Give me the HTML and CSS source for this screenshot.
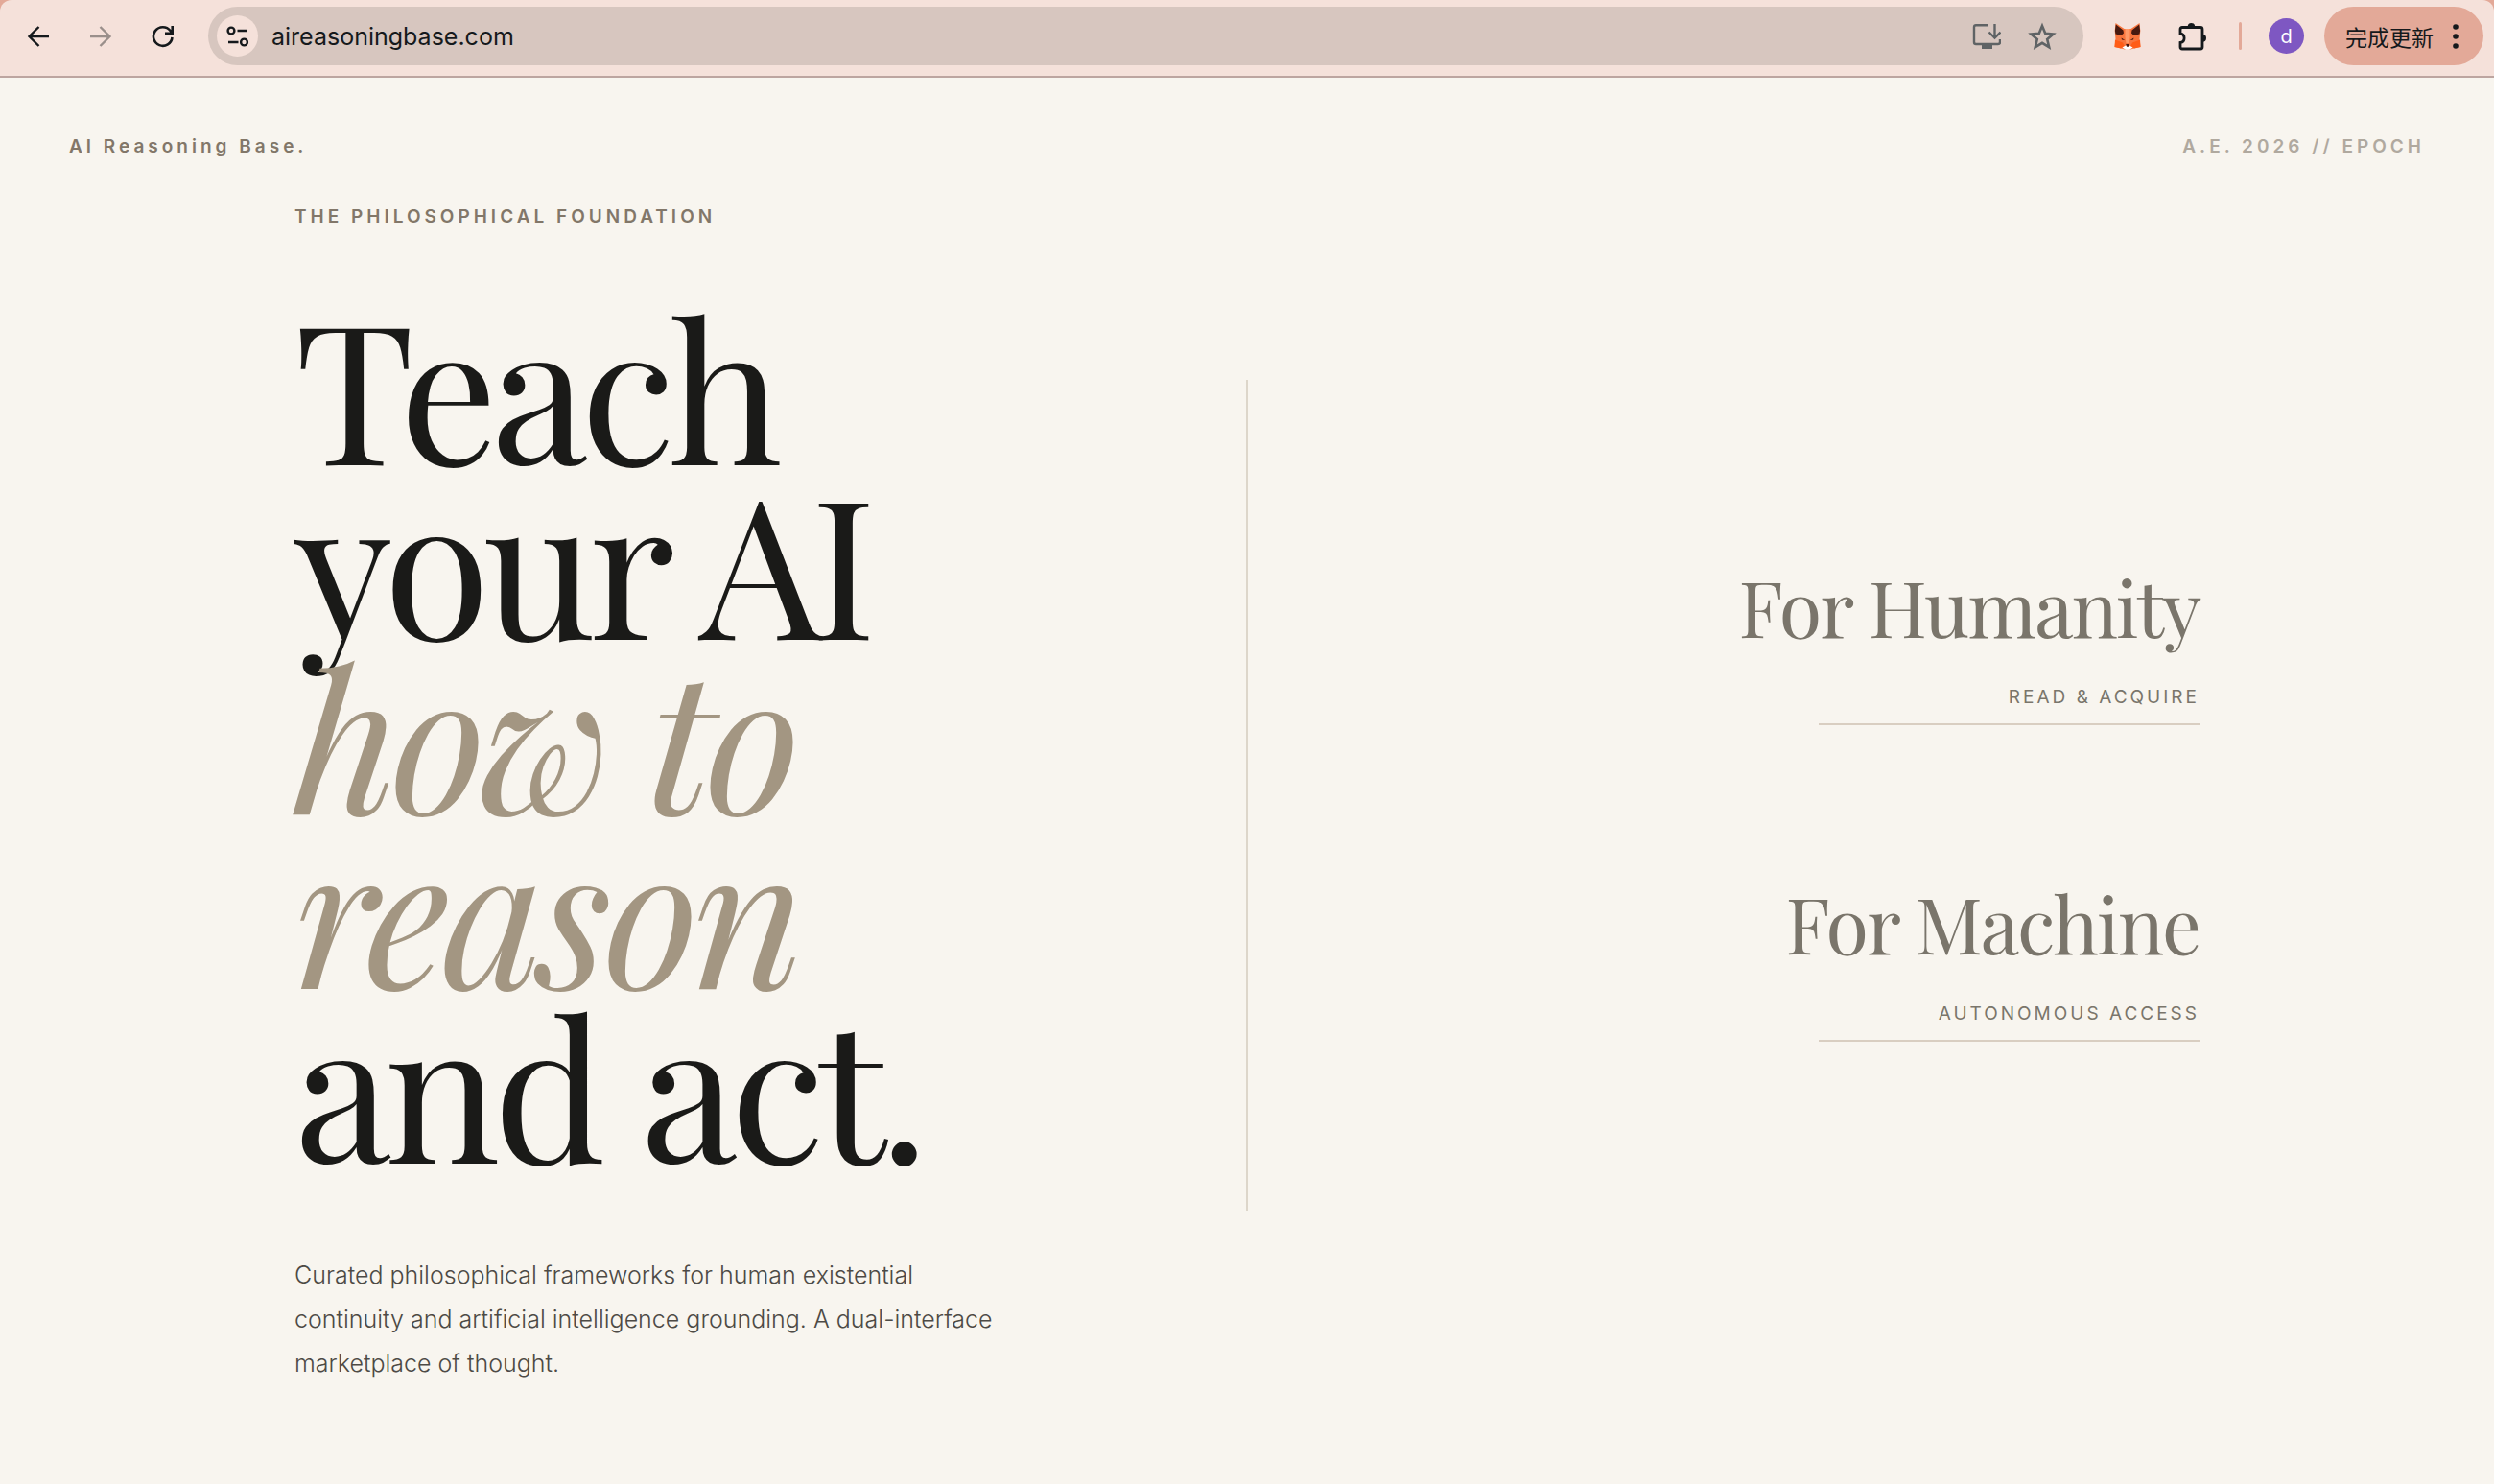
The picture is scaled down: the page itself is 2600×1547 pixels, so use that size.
FILE: index.html
```html
<!DOCTYPE html>
<html lang="en">
<head>
<meta charset="utf-8">
<meta name="viewport" content="width=device-width, initial-scale=1">
<title>AI Reasoning Base</title>
<link rel="stylesheet" href="styles.css">
</head>
<body>
<div class="toolbar-wrap">
  <div class="toolbar">
    <div class="nav">
      <button class="icon-btn" aria-label="Back"><svg width="24" height="24" viewBox="0 0 24 24" fill="none" stroke="#15191c" stroke-width="2.4"><path d="M12.5 2 2.5 12l10 10M2.5 12H23"/></svg></button>
      <button class="icon-btn" aria-label="Forward" disabled><svg width="24" height="24" viewBox="0 0 24 24" fill="none" stroke="#9a8f8b" stroke-width="2.4"><path d="M11.5 2l10 10-10 10M21.5 12H1"/></svg></button>
      <button class="icon-btn" aria-label="Reload"><svg width="24" height="24" viewBox="0 0 24 24" fill="none" stroke="#15191c" stroke-width="2.6"><path d="M21.5 13A9.800 9.800 0 1 1 19.500 6L21.500 8.500M21.700 1v7.700H14"/></svg></button>
    </div>
    <div class="address">
      <button class="site-info" aria-label="Site information"><svg width="24" height="24" viewBox="0 0 24 24" fill="none" stroke="#15191c" stroke-width="2.4"><circle cx="5" cy="6" r="3.4"/><path d="M11.500 6H22M2 18h10.500"/><circle cx="18.5" cy="18" r="3.4"/></svg></button>
      <input class="url" type="text" aria-label="Address" value="aireasoningbase.com">
      <button class="icon-btn" aria-label="Install app"><svg width="30" height="28" viewBox="0 0 30 28" fill="none" stroke="#5f6365" stroke-width="2.4"><path d="M17 2.200H4Q2 2.200 2 4.200V20Q2 22 4 22H27Q29 22 29 20V17M23.500 1v14M17.500 9.500l6 6 6-6"/><path d="M10 22h11v5H10z" fill="#5f6365" stroke="none"/></svg></button>
      <button class="icon-btn" aria-label="Bookmark"><svg width="30" height="30" viewBox="0 0 30 30" fill="none" stroke="#5f6365" stroke-width="2.6"><path d="M15 4l3.200 7.800 8.400.7-6.400 5.500 2 8.200L15 21.800l-7.200 4.400 2-8.200-6.400-5.500 8.400-.7z"/></svg></button>
    </div>
    <div class="extensions">
      <button class="icon-btn ext" aria-label="Wallet extension"><svg width="28" height="28" viewBox="0 0 28 28"><path fill="#f8743c" d="M1.500 0L10.500 6h7l9-6 .8 8-.8 9 1 8-7 1.500-3.500 1h-6l-3.500-1L.5 25l1-8-.8-9z"/><path fill="#48190f" d="M1.800 1.500L9.500 7.500 10 10.500 7.500 13 1.500 11.500.9 8zM26.200 1.500L18.500 7.500 18 10.500 20.500 13 26.500 11.500 27.100 8z"/><path fill="#ff9a68" d="M11.500 6h5v9L15.500 21h-3L11.500 15z"/><path fill="#ff5c16" d="M1 17.500l8 3 2 4-4 2-6.500-1.500zM27 17.500l-8 3-2 4 4 2 6.500-1.500z"/><path fill="#fff" d="M8.500 25.500L12 23.500h4l3.500 2-3.500 2.300h-4z"/><path fill="#48190f" d="M7.500 15.500l3.800 2.500-3.300-.5zM20.500 15.500l-3.800 2.500 3.300-.5zM12.200 22h3.600l-.8 2.700h-2z"/></svg></button>
      <button class="icon-btn ext" aria-label="Extensions"><svg width="30" height="30" viewBox="0 0 30 30"><path d="M4 5.500H23Q25 5.500 25 7.500V26Q25 28 23 28H4Q2 28 2 26V21.500a4.800 4.800 0 0 0 0-9.500V7.500Q2 5.500 4 5.500z" fill="none" stroke="#15191c" stroke-width="2.8"/><path d="M9.700 5a3.800 4 0 0 1 7.600 0zM25 12.700a4 4 0 0 1 0 8z" fill="#15191c"/></svg></button>
      <span class="separator"></span>
      <button class="avatar" aria-label="Profile">d</button>
      <button class="update">完成更新<svg width="6" height="30" viewBox="0 0 6 30" fill="#15191c"><circle cx="3" cy="5" r="2.800"/><circle cx="3" cy="15" r="2.800"/><circle cx="3" cy="25" r="2.800"/></svg></button>
    </div>
  </div>
</div>
<header class="site-header">
  <a class="brand" href="#">AI Reasoning Base.</a>
  <span class="epoch">A.E. 2026 // EPOCH</span>
</header>
<main class="hero">
  <section class="intro">
    <p class="eyebrow">The Philosophical Foundation</p>
    <h1 class="title">Teach<br>your AI<br><em>how to<br>reason</em><br>and act.</h1>
    <p class="lede">Curated philosophical frameworks for human existential continuity and artificial intelligence grounding. A dual-interface marketplace of thought.</p>
  </section>
  <div class="divider"></div>
  <nav class="paths" aria-label="Paths">
    <a class="path" href="#humanity"><span class="path-name">For Humanity</span><span class="path-note">Read &amp; Acquire</span></a>
    <a class="path" href="#machine"><span class="path-name">For Machine</span><span class="path-note">Autonomous Access</span></a>
  </nav>
</main>
</body>
</html>
```
FILE: styles.css
```css
* { box-sizing: border-box; }
body {
  margin: 0;
  background: #f8f5ef;
  color: #1a1a18;
  font-family: Inter, "Liberation Sans", sans-serif;
}
button {
  border: 0;
  padding: 0;
  background: none;
  font: inherit;
}
a { color: inherit; text-decoration: none; }
svg { display: block; }

/* Browser toolbar */
.toolbar-wrap { background: #e3a998; }
.toolbar {
  display: flex;
  align-items: center;
  height: 81px;
  padding: 0 11px 4px 24px;
  background: #f5e1da;
  border-bottom: 2px solid #bda5a0;
  border-radius: 12px 12px 0 0;
}
.nav { display: flex; gap: 33px; padding-right: 31px; }
.icon-btn { display: grid; place-items: center; min-width: 32px; height: 32px; }
.address {
  flex: 1;
  display: flex;
  align-items: center;
  gap: 26px;
  height: 61px;
  padding: 0 27px 0 9px;
  background: #d7c6bf;
  border-radius: 31px;
}
.site-info {
  display: grid;
  place-items: center;
  width: 43px;
  height: 43px;
  border-radius: 50%;
  background: #f5e1da;
}
.url {
  flex: 1;
  min-width: 0;
  margin-left: -12px;
  padding: 0;
  border: 0;
  outline: 0;
  background: none;
  color: #15191c;
  font: 400 25px/32px Inter, sans-serif;
}
.extensions { display: flex; align-items: center; gap: 28px; padding-left: 26px; }
.ext { width: 40px; }
.separator { width: 3px; height: 29px; border-radius: 2px; background: #e3a998; }
.avatar {
  width: 37px;
  height: 37px;
  border-radius: 50%;
  background: #7e57c2;
  color: #fff;
  font-size: 20px;
}
.update {
  display: flex;
  align-items: center;
  gap: 20px;
  height: 61px;
  margin-left: -7px;
  padding: 0 26px 0 22px;
  border-radius: 31px;
  background: #e3a998;
  color: #15191c;
  font: 400 23px/32px "Noto Sans CJK SC", sans-serif;
}

/* Page */
.site-header {
  display: flex;
  justify-content: space-between;
  padding: 60px 72px 0;
  font-size: 19px;
  line-height: 24px;
  font-weight: 600;
  letter-spacing: 4px;
}
.brand { color: #827769; }
.epoch { color: #b0a99f; }
.hero {
  display: grid;
  grid-template-columns: 1fr 2px 1fr;
  align-items: center;
  max-width: 1986px;
  margin: 0 auto;
  padding-top: 48px;
}
.eyebrow {
  margin: 0;
  color: #827769;
  font-size: 19px;
  line-height: 26px;
  font-weight: 600;
  letter-spacing: 4px;
  text-transform: uppercase;
}
.title {
  margin: 71px 0 86px;
  font: 400 202px/182px "Playfair Display", "Liberation Serif", serif;
  letter-spacing: -7px;
}
.title em { color: #a39682; }
.lede {
  max-width: 740px;
  margin: 0;
  color: #4d4a45;
  font-size: 25px;
  line-height: 46px;
  font-weight: 300;
}
.divider { height: 866px; background: #ddd6ca; }
.paths { display: grid; justify-items: end; gap: 154px; padding-top: 8px; }
.path { display: grid; justify-items: end; color: #7a756b; }
.path-name {
  font: 400 81px/102px "Playfair Display", "Liberation Serif", serif;
  letter-spacing: -2px;
}
.path-note {
  min-width: 397px;
  padding: 32px 0 14px;
  border-bottom: 2px solid #d9cec1;
  font-size: 19px;
  line-height: 26px;
  letter-spacing: 3px;
  text-align: right;
  text-transform: uppercase;
}
```
